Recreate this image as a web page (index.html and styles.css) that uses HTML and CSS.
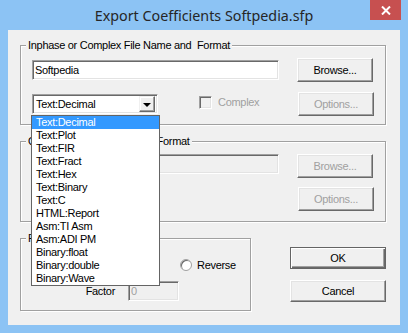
FILE: index.html
```html
<!DOCTYPE HTML>
<html>

<head>
    <link rel="stylesheet" href="styles.css">
    <title>Export Coefficients</title>
</head>

<body>
    <div class="window">
        <div class="titlebar">
            <span class="title">Export Coefficients Softpedia.sfp</span>
            <button class="close" type="button">
                <svg width="10" height="9" viewBox="0 0 10 9">
                    <path d="M1 0.5 L9 8.5 M9 0.5 L1 8.5" stroke="#fff" stroke-width="2" />
                </svg>
            </button>
        </div>
        <div class="client">
            <div class="group group1">
                <span class="legend">Inphase or Complex File Name and  Format</span>
                <div class="row row-first">
                    <input class="edit edit-name" type="text" value="Softpedia">
                    <button class="btn" type="button">Browse...</button>
                </div>
                <div class="row">
                    <div class="combo">
                        <span class="combo-text">Text:Decimal</span>
                        <span class="combo-arrow"></span>
                    </div>
                    <label class="check disabled"><span class="check-box"></span>Complex</label>
                    <button class="btn btn-right" type="button" disabled>Options...</button>
                </div>
            </div>
            <div class="group group2">
                <span class="legend">Quadrature File Name and  Format</span>
                <div class="row row-first row-top">
                    <input class="edit edit-name" type="text" value="" disabled>
                    <button class="btn" type="button" disabled>Browse...</button>
                </div>
                <div class="row">
                    <button class="btn btn-right" type="button" disabled>Options...</button>
                </div>
            </div>
            <div class="bottom">
                <div class="group group3">
                    <span class="legend">F</span>
                    <div class="radios">
                        <label class="radio"><span class="radio-dot"></span>Reverse</label>
                    </div>
                    <div class="factor">
                        <span class="factor-label">Factor</span>
                        <input class="edit edit-factor" type="text" value="0" disabled>
                    </div>
                </div>
                <div class="actions">
                    <button class="btn btn-action default" type="button">OK</button>
                    <button class="btn btn-action" type="button">Cancel</button>
                </div>
            </div>
            <!-- open list of the format combo -->
            <ul class="droplist">
                <li class="selected">Text:Decimal</li>
                <li>Text:Plot</li>
                <li>Text:FIR</li>
                <li>Text:Fract</li>
                <li>Text:Hex</li>
                <li>Text:Binary</li>
                <li>Text:C</li>
                <li>HTML:Report</li>
                <li>Asm:TI Asm</li>
                <li>Asm:ADI PM</li>
                <li>Binary:float</li>
                <li>Binary:double</li>
                <li>Binary:Wave</li>
            </ul>
        </div>
    </div>
</body>

</html>
```

FILE: styles.css
```css
* {
    box-sizing: border-box;
}
body {
    margin: 0;
    font-family: "Liberation Sans", Arial, sans-serif;
    font-size: 11px;
    letter-spacing: -0.3px;
    color: #000;
}
.window {
    width: 408px;
    height: 333px;
    background-color: #8cc3f4;
    padding: 0 8px 8px;
    display: flex;
    flex-direction: column;
    overflow: hidden;
}
.titlebar {
    height: 30px;
    flex: none;
    display: grid;
    grid-template-columns: 1fr auto 1fr;
}
.title {
    grid-column: 2;
    font-family: "Noto Sans", sans-serif;
    font-size: 14.3px;
    letter-spacing: 0;
    line-height: 30px;
    color: #262626;
    padding-top: 1px;
}
.close {
    grid-column: 3;
    justify-self: end;
    align-self: start;
    margin-right: -1px;
    width: 31px;
    height: 20px;
    border: none;
    padding: 0;
    background-color: #c75050;
    display: flex;
    align-items: center;
    justify-content: center;
}
.client {
    flex: 1;
    background-color: #f0f0f0;
    padding: 15px 0 0 12px;
    position: relative;
}

/* group boxes */
.group {
    width: 366px;
    border: 1px solid #a0a0a0;
    box-shadow: inset 1px 1px #fff, 1px 1px #fff;
    padding: 0 11px;
}
.group1 {
    height: 80px;
    margin-bottom: 16px;
}
.group2 {
    height: 81px;
    margin-bottom: 16px;
}
.legend {
    display: block;
    width: fit-content;
    margin: -7px 0 0 -6px;
    padding: 0 2px;
    line-height: 13px;
    background-color: #f0f0f0;
    white-space: pre;
}
.row {
    display: flex;
    align-items: center;
    margin-top: 10px;
}
.row-first {
    margin-top: 6px;
}
.row-top {
    align-items: flex-start;
}
.group2 .row {
    margin-top: 9px;
}
.group2 .row-first {
    margin-top: 6px;
}

/* controls */
.btn {
    font: inherit;
    letter-spacing: inherit;
    color: #000;
    width: 76px;
    height: 24px;
    padding: 0;
    background-color: #f0f0f0;
    border: 1px solid;
    border-color: #fff #696969 #696969 #fff;
    box-shadow: inset -1px -1px #a0a0a0, inset 1px 1px #e3e3e3;
}
.btn:disabled {
    color: #a0a0a0;
}
.btn-right {
    margin-left: auto;
}
.edit {
    font: inherit;
    letter-spacing: inherit;
    color: #000;
    height: 20px;
    padding: 0 2px;
    background-color: #fff;
    border: 1px solid;
    border-color: #a0a0a0 #fff #fff #a0a0a0;
    box-shadow: inset 1px 1px #696969, inset -1px -1px #e3e3e3;
    outline: none;
}
.edit:disabled {
    background-color: #f0f0f0;
    color: #a0a0a0;
}
.edit-name {
    width: 247px;
    margin-right: 18px;
}
.combo {
    width: 126px;
    height: 20px;
    display: flex;
    align-items: center;
    background-color: #fff;
    border: 1px solid;
    border-color: #a0a0a0 #fff #fff #a0a0a0;
    box-shadow: inset 1px 1px #696969, inset -1px -1px #e3e3e3;
    padding: 2px 2px 2px 3px;
}
.combo-text {
    flex: 1;
}
.combo-arrow {
    width: 16px;
    height: 16px;
    background-color: #f0f0f0;
    border: 1px solid;
    border-color: #f0f0f0 #696969 #696969 #f0f0f0;
    box-shadow: inset -1px -1px #a0a0a0, inset 1px 1px #fff;
    display: flex;
    align-items: center;
    justify-content: center;
}
.combo-arrow::after {
    content: "";
    border-left: 4px solid transparent;
    border-right: 4px solid transparent;
    border-top: 4px solid #000;
    margin-top: 1px;
}
.check {
    display: flex;
    align-items: center;
    margin-left: 41px;
    margin-top: -4px;
}
.disabled {
    color: #a0a0a0;
}
.check-box {
    width: 13px;
    height: 13px;
    margin-right: 6px;
    background-color: #f0f0f0;
    border: 1px solid;
    border-color: #a0a0a0 #fff #fff #a0a0a0;
    box-shadow: inset 1px 1px #696969, inset -1px -1px #e3e3e3;
}

/* lower part */
.bottom {
    display: flex;
    align-items: flex-start;
}
.group3 {
    width: 231px;
    height: 73px;
}
.radios {
    display: flex;
    margin-top: 13px;
    height: 13px;
    align-items: center;
    padding-left: 148px;
}
.radio {
    display: flex;
    align-items: center;
}
.radio-dot {
    width: 12px;
    height: 12px;
    border-radius: 50%;
    background-color: #fff;
    border: 1px solid #a0a0a0;
    box-shadow: inset 1px 1px #696969;
    margin-right: 5px;
}
.factor {
    display: flex;
    align-items: center;
    margin-top: 10px;
}
.factor-label {
    width: 83px;
    text-align: right;
    margin-right: 13px;
}
.edit-factor {
    width: 51px;
}
.actions {
    display: flex;
    flex-direction: column;
    gap: 11px;
    margin: 9px 0 0 39px;
}
.btn-action {
    width: 96px;
    height: 22px;
}
.default {
    border-color: #646464;
    box-shadow: inset 1px 1px #fff, inset -1px -1px #696969, inset -2px -2px #a0a0a0;
}

/* dropped-down list, lies over the dialog */
.droplist {
    position: absolute;
    left: 23px;
    top: 85px;
    width: 129px;
    margin: 0;
    padding: 0;
    list-style: none;
    background-color: #fff;
    border: 1px solid #646464;
}
.droplist li {
    height: 13px;
    line-height: 13px;
    padding-left: 4px;
    white-space: nowrap;
}
.droplist .selected {
    background-color: #3399ff;
    color: #fff;
}
```
